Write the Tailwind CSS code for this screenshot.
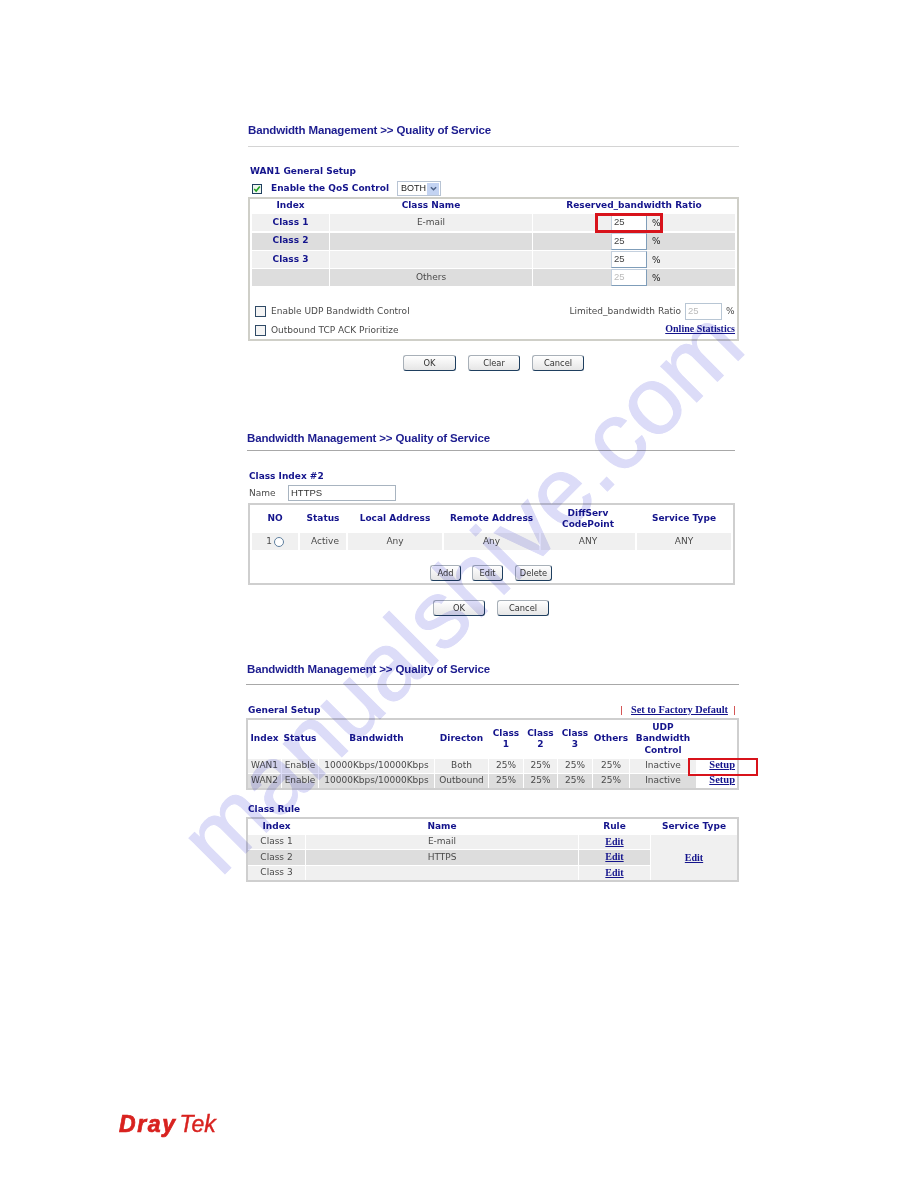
<!doctype html>
<html lang="en">
<head>
<meta charset="utf-8">
<title>Bandwidth Management</title>
<script src="https://cdn.jsdelivr.net/npm/@tailwindcss/browser@4"></script>
</head>
<body class="bg-white">
<div class="relative w-[918px] h-[1188px] overflow-hidden bg-white font-['DejaVu_Sans',sans-serif] text-[9px] text-[#4a4a4a]">
  <div class="pt-[121px] pl-[247px]">

    <!-- Section 1 -->
    <section class="ml-px w-[491px]">
      <h2 class="h-[18px] leading-[18px] font-['Liberation_Sans',sans-serif] text-[11.5px] font-bold tracking-[-0.15px] text-[#1d1d8f] whitespace-nowrap">Bandwidth Management &gt;&gt; Quality of Service</h2>
      <div class="mt-[7px] h-px bg-[#d4d4d4]"></div>
      <h3 class="mt-[18px] ml-[2px] h-[12px] leading-[12px] font-bold text-[#14148c]">WAN1 General Setup</h3>
      <div class="mt-[3px] h-[17px] flex items-center pl-[4px]">
        <span class="w-[10px] h-[10px] border border-[#1f3f5f] bg-[#eef6ee] flex items-center justify-center">
          <svg viewBox="0 0 10 10" class="w-[8px] h-[8px]"><path d="M1.5 5 L4 7.5 L8.5 2" fill="none" stroke="#22a022" stroke-width="2"/></svg>
        </span>
        <span class="ml-[9px] font-bold text-[#14148c]">Enable the QoS Control</span>
        <span class="ml-[8px] w-[44px] h-[15px] border border-[#b8c4d4] flex items-center justify-between pl-[3px] pr-px font-['Liberation_Sans',sans-serif] text-[#222]">BOTH
          <span class="w-[12px] h-[12px] bg-[#c3d3f2] flex items-center justify-center"><svg viewBox="0 0 8 8" class="w-[7px] h-[7px]"><path d="M1 2.5 L4 5.5 L7 2.5" fill="none" stroke="#4d6185" stroke-width="1.6"/></svg></span>
        </span>
      </div>
      <div class="h-[144px] border-2 border-[#cfcfc8] px-[2px]">
        <div class="grid grid-cols-[77px_202px_202px] gap-x-px gap-y-[1.33px] items-stretch grid-rows-[14px_17px_17px_17px_17px]">
          <div class="flex items-center justify-center font-bold text-[#14148c]">Index</div>
          <div class="flex items-center justify-center font-bold text-[#14148c]">Class Name</div>
          <div class="flex items-center justify-center font-bold text-[#14148c]">Reserved_bandwidth Ratio</div>

          <div class="bg-[#f0f0f0] flex items-center justify-center font-bold text-[#14148c]">Class 1</div>
          <div class="bg-[#f0f0f0] flex items-center justify-center">E-mail</div>
          <div class="bg-[#f0f0f0] flex items-center pl-[78px]"><input readonly value="25" class="w-[36px] h-[17px] bg-white border border-[#c4d0de] border-r-[#7f9db9] border-b-[#7f9db9] px-[2px] pb-[2px] font-['Liberation_Sans',sans-serif] text-[9.5px] text-[#444]"><span class="ml-[5px] mt-[2px] text-[#222]">%</span></div>

          <div class="bg-[#dddddd] flex items-center justify-center font-bold text-[#14148c]">Class 2</div>
          <div class="bg-[#dddddd]"></div>
          <div class="bg-[#dddddd] flex items-center pl-[78px]"><input readonly value="25" class="w-[36px] h-[17px] bg-white border border-[#c4d0de] border-r-[#7f9db9] border-b-[#7f9db9] px-[2px] pb-[2px] font-['Liberation_Sans',sans-serif] text-[9.5px] text-[#444]"><span class="ml-[5px] mt-[2px] text-[#222]">%</span></div>

          <div class="bg-[#f0f0f0] flex items-center justify-center font-bold text-[#14148c]">Class 3</div>
          <div class="bg-[#f0f0f0]"></div>
          <div class="bg-[#f0f0f0] flex items-center pl-[78px]"><input readonly value="25" class="w-[36px] h-[17px] bg-white border border-[#c4d0de] border-r-[#7f9db9] border-b-[#7f9db9] px-[2px] pb-[2px] font-['Liberation_Sans',sans-serif] text-[9.5px] text-[#444]"><span class="ml-[5px] mt-[2px] text-[#222]">%</span></div>

          <div class="bg-[#dddddd]"></div>
          <div class="bg-[#dddddd] flex items-center justify-center">Others</div>
          <div class="bg-[#dddddd] flex items-center pl-[78px]"><input readonly value="25" class="w-[36px] h-[17px] bg-white border border-[#c4d0de] border-r-[#7f9db9] border-b-[#7f9db9] px-[2px] pb-[2px] font-['Liberation_Sans',sans-serif] text-[9.5px] text-[#bbb]"><span class="ml-[5px] mt-[2px] text-[#222]">%</span></div>
        </div>
        <div class="mt-[16px] h-[19px] flex items-center justify-between pl-[3px]">
          <div class="flex items-center"><span class="w-[11px] h-[11px] border border-[#2f4a66] bg-[#f4f4f4]"></span><span class="ml-[5px]">Enable UDP Bandwidth Control</span></div>
          <div class="flex items-center"><span>Limited_bandwidth Ratio</span><input readonly value="25" class="ml-[4px] w-[37px] h-[17px] bg-white border border-[#b8c6d4] px-[2px] pb-[2px] font-['Liberation_Sans',sans-serif] text-[9.5px] text-[#bbb]"><span class="ml-[4px] w-[9px]">%</span></div>
        </div>
        <div class="h-[18px] flex items-center justify-between pl-[3px]">
          <div class="flex items-center"><span class="w-[11px] h-[11px] border border-[#2f4a66] bg-[#f4f4f4]"></span><span class="ml-[5px]">Outbound TCP ACK Prioritize</span></div>
          <a class="-mt-[3px] font-['Liberation_Serif',serif] text-[10px] font-bold underline text-[#14148c]">Online Statistics</a>
        </div>
      </div>
      <div class="mt-[14px] ml-[155px] flex gap-[12px]">
        <button class="w-[53px] h-[16px] rounded-[3px] border border-[#a8b0b8] border-r-[#1f3f5f] border-b-[#1f3f5f] bg-linear-to-b from-white to-[#e6e6e6] text-[8.3px] text-[#333] leading-none">OK</button>
        <button class="w-[52px] h-[16px] rounded-[3px] border border-[#a8b0b8] border-r-[#1f3f5f] border-b-[#1f3f5f] bg-linear-to-b from-white to-[#e6e6e6] text-[8.3px] text-[#333] leading-none">Clear</button>
        <button class="w-[52px] h-[16px] rounded-[3px] border border-[#a8b0b8] border-r-[#1f3f5f] border-b-[#1f3f5f] bg-linear-to-b from-white to-[#e6e6e6] text-[8.3px] text-[#333] leading-none">Cancel</button>
      </div>
    </section>

    <!-- Section 2 -->
    <section class="mt-[58px] w-[488px]">
      <h2 class="h-[18px] leading-[18px] font-['Liberation_Sans',sans-serif] text-[11.5px] font-bold tracking-[-0.15px] text-[#1d1d8f] whitespace-nowrap">Bandwidth Management &gt;&gt; Quality of Service</h2>
      <div class="mt-[3px] h-px bg-[#a8a8a8]"></div>
      <h3 class="mt-[19px] ml-[2px] h-[12px] leading-[12px] font-bold text-[#14148c]">Class Index #2</h3>
      <div class="mt-[3px] h-[16px] flex items-center pl-[2px]">
        <span class="w-[39px] mt-[2px]">Name</span>
        <input readonly value="HTTPS" class="w-[108px] h-[16px] bg-white border border-[#a8b4c0] px-[2px] pb-[2px] font-['Liberation_Sans',sans-serif] text-[9.5px] text-[#333]">
      </div>
      <div class="mt-[2px] ml-px h-[82px] border-2 border-[#cfcfcf] px-[2px]">
        <div class="grid grid-cols-[46px_46px_94px_95px_94px_94px] gap-x-[2px] grid-rows-[28px_17px]">
          <div class="flex items-center justify-center font-bold text-[#14148c]">NO</div>
          <div class="flex items-center justify-center font-bold text-[#14148c]">Status</div>
          <div class="flex items-center justify-center font-bold text-[#14148c]">Local Address</div>
          <div class="flex items-center justify-center font-bold text-[#14148c]">Remote Address</div>
          <div class="flex items-center justify-center text-center leading-[11px] font-bold text-[#14148c]">DiffServ<br>CodePoint</div>
          <div class="flex items-center justify-center font-bold text-[#14148c]">Service Type</div>

          <div class="bg-[#f0f0f0] flex items-center justify-center gap-[2px]">1<span class="w-[10px] h-[10px] rounded-full border border-[#5f7f9f] bg-white"></span></div>
          <div class="bg-[#f0f0f0] flex items-center justify-center pl-[4px]">Active</div>
          <div class="bg-[#f0f0f0] flex items-center justify-center">Any</div>
          <div class="bg-[#f0f0f0] flex items-center justify-center">Any</div>
          <div class="bg-[#f0f0f0] flex items-center justify-center">ANY</div>
          <div class="bg-[#f0f0f0] flex items-center justify-center">ANY</div>
        </div>
        <div class="mt-[15px] ml-[178px] flex">
          <button class="w-[31px] h-[16px] rounded-[3px] border border-[#a8b0b8] border-r-[#1f3f5f] border-b-[#1f3f5f] bg-linear-to-b from-white to-[#e6e6e6] text-[8.3px] text-[#333] leading-none">Add</button>
          <button class="ml-[11px] w-[31px] h-[16px] rounded-[3px] border border-[#a8b0b8] border-r-[#1f3f5f] border-b-[#1f3f5f] bg-linear-to-b from-white to-[#e6e6e6] text-[8.3px] text-[#333] leading-none">Edit</button>
          <button class="ml-[12px] w-[37px] h-[16px] rounded-[3px] border border-[#a8b0b8] border-r-[#1f3f5f] border-b-[#1f3f5f] bg-linear-to-b from-white to-[#e6e6e6] text-[8.3px] text-[#333] leading-none">Delete</button>
        </div>
      </div>
      <div class="mt-[15px] ml-[186px] flex gap-[12px]">
        <button class="w-[52px] h-[16px] rounded-[3px] border border-[#a8b0b8] border-r-[#1f3f5f] border-b-[#1f3f5f] bg-linear-to-b from-white to-[#e6e6e6] text-[8.3px] text-[#333] leading-none">OK</button>
        <button class="w-[52px] h-[16px] rounded-[3px] border border-[#a8b0b8] border-r-[#1f3f5f] border-b-[#1f3f5f] bg-linear-to-b from-white to-[#e6e6e6] text-[8.3px] text-[#333] leading-none">Cancel</button>
      </div>
    </section>

    <!-- Section 3 -->
    <section class="mt-[44px] -ml-px w-[493px]">
      <h2 class="ml-px h-[18px] leading-[18px] font-['Liberation_Sans',sans-serif] text-[11.5px] font-bold tracking-[-0.15px] text-[#1d1d8f] whitespace-nowrap">Bandwidth Management &gt;&gt; Quality of Service</h2>
      <div class="mt-[6px] h-px bg-[#a8a8a8]"></div>
      <div class="mt-[19px] h-[12px] leading-[12px] flex justify-between pl-[2px] pr-[3px]">
        <h3 class="font-bold text-[#14148c]">General Setup</h3>
        <div class="flex items-center text-[#14148c]"><span class="text-[#c82020]">|</span><a class="ml-[8px] font-['Liberation_Serif',serif] text-[10.3px] font-bold underline">Set to Factory Default</a><span class="ml-[5px] text-[#c82020]">|</span></div>
      </div>
      <div class="mt-[2px] h-[72px] border-2 border-[#cfcfcf]">
        <div class="grid grid-cols-[33px_36px_115px_53px_34px_33px_34px_36px_66px_40px] gap-x-px gap-y-px grid-rows-[38px_14px_14px] text-center">
          <div class="flex items-center justify-center font-bold text-[#14148c]">Index</div>
          <div class="flex items-center justify-center font-bold text-[#14148c]">Status</div>
          <div class="flex items-center justify-center font-bold text-[#14148c]">Bandwidth</div>
          <div class="flex items-center justify-center font-bold text-[#14148c]">Directon</div>
          <div class="flex items-center justify-center leading-[11px] font-bold text-[#14148c]">Class<br>1</div>
          <div class="flex items-center justify-center leading-[11px] font-bold text-[#14148c]">Class<br>2</div>
          <div class="flex items-center justify-center leading-[11px] font-bold text-[#14148c]">Class<br>3</div>
          <div class="flex items-center justify-center font-bold text-[#14148c]">Others</div>
          <div class="flex items-center justify-center leading-[11.5px] font-bold text-[#14148c]">UDP<br>Bandwidth<br>Control</div>
          <div></div>

          <div class="bg-[#f0f0f0] flex items-center justify-center">WAN1</div>
          <div class="bg-[#f0f0f0] flex items-center justify-center">Enable</div>
          <div class="bg-[#f0f0f0] flex items-center justify-center">10000Kbps/10000Kbps</div>
          <div class="bg-[#f0f0f0] flex items-center justify-center">Both</div>
          <div class="bg-[#f0f0f0] flex items-center justify-center">25%</div>
          <div class="bg-[#f0f0f0] flex items-center justify-center">25%</div>
          <div class="bg-[#f0f0f0] flex items-center justify-center">25%</div>
          <div class="bg-[#f0f0f0] flex items-center justify-center">25%</div>
          <div class="bg-[#f0f0f0] flex items-center justify-center">Inactive</div>
          <div class="flex items-center justify-end pr-[2px]"><a class="-mt-[2px] font-['Liberation_Serif',serif] text-[10.5px] font-bold underline text-[#14148c]">Setup</a></div>

          <div class="bg-[#dddddd] flex items-center justify-center">WAN2</div>
          <div class="bg-[#dddddd] flex items-center justify-center">Enable</div>
          <div class="bg-[#dddddd] flex items-center justify-center">10000Kbps/10000Kbps</div>
          <div class="bg-[#dddddd] flex items-center justify-center">Outbound</div>
          <div class="bg-[#dddddd] flex items-center justify-center">25%</div>
          <div class="bg-[#dddddd] flex items-center justify-center">25%</div>
          <div class="bg-[#dddddd] flex items-center justify-center">25%</div>
          <div class="bg-[#dddddd] flex items-center justify-center">25%</div>
          <div class="bg-[#dddddd] flex items-center justify-center">Inactive</div>
          <div class="flex items-center justify-end pr-[2px]"><a class="-mt-[2px] font-['Liberation_Serif',serif] text-[10.5px] font-bold underline text-[#14148c]">Setup</a></div>
        </div>
      </div>
      <h3 class="mt-[13px] ml-[2px] h-[12px] leading-[12px] font-bold text-[#14148c]">Class Rule</h3>
      <div class="mt-[2px] h-[65px] border-2 border-[#cfcfcf]">
        <div class="grid grid-cols-[57px_272px_71px_86px] gap-x-px gap-y-px grid-rows-[15px_14px_15px_14px]">
          <div class="flex items-center justify-center font-bold text-[#14148c]">Index</div>
          <div class="flex items-center justify-center font-bold text-[#14148c]">Name</div>
          <div class="flex items-center justify-center font-bold text-[#14148c]">Rule</div>
          <div class="flex items-center justify-center font-bold text-[#14148c]">Service Type</div>

          <div class="bg-[#f0f0f0] flex items-center justify-center">Class 1</div>
          <div class="bg-[#f0f0f0] flex items-center justify-center">E-mail</div>
          <div class="bg-[#f0f0f0] flex items-center justify-center"><a class="-mt-[2px] font-['Liberation_Serif',serif] text-[10px] font-bold underline text-[#14148c]">Edit</a></div>
          <div class="row-span-3 bg-[#f0f0f0] flex items-center justify-center"><a class="font-['Liberation_Serif',serif] text-[10px] font-bold underline text-[#14148c]">Edit</a></div>

          <div class="bg-[#dddddd] flex items-center justify-center">Class 2</div>
          <div class="bg-[#dddddd] flex items-center justify-center">HTTPS</div>
          <div class="bg-[#dddddd] flex items-center justify-center"><a class="-mt-[2px] font-['Liberation_Serif',serif] text-[10px] font-bold underline text-[#14148c]">Edit</a></div>

          <div class="bg-[#f0f0f0] flex items-center justify-center">Class 3</div>
          <div class="bg-[#f0f0f0]"></div>
          <div class="bg-[#f0f0f0] flex items-center justify-center"><a class="-mt-[2px] font-['Liberation_Serif',serif] text-[10px] font-bold underline text-[#14148c]">Edit</a></div>
        </div>
      </div>
    </section>

    <!-- Logo -->
    <footer class="mt-[228px] -ml-[128px] h-[28px] flex items-baseline italic text-[#d8221f] leading-[28px] font-['Liberation_Sans',sans-serif]">
      <span class="text-[23px] font-bold tracking-[1.6px] [-webkit-text-stroke:0.7px_#d8221f]">Dray</span><span class="ml-[3px] text-[23px] font-normal [-webkit-text-stroke:0.4px_#d8221f]">Tek</span>
    </footer>
  </div>

  <!-- Red annotations -->
  <div class="absolute left-[595px] top-[213px] w-[68px] h-[20px] border-[3px] border-[#d8131b]"></div>
  <div class="absolute left-[688px] top-[758px] w-[70px] h-[18px] border-2 border-[#d8131b]"></div>

  <!-- Watermark -->
  <div class="absolute left-[461px] top-[591px] -translate-x-1/2 -translate-y-1/2 -rotate-45 whitespace-nowrap font-['Liberation_Sans',sans-serif] text-[96px] leading-none text-[#dcdcf8] [-webkit-text-stroke:1px_#dcdcf8] mix-blend-multiply pointer-events-none">manualshive.com</div>
</div>
</body>
</html>
